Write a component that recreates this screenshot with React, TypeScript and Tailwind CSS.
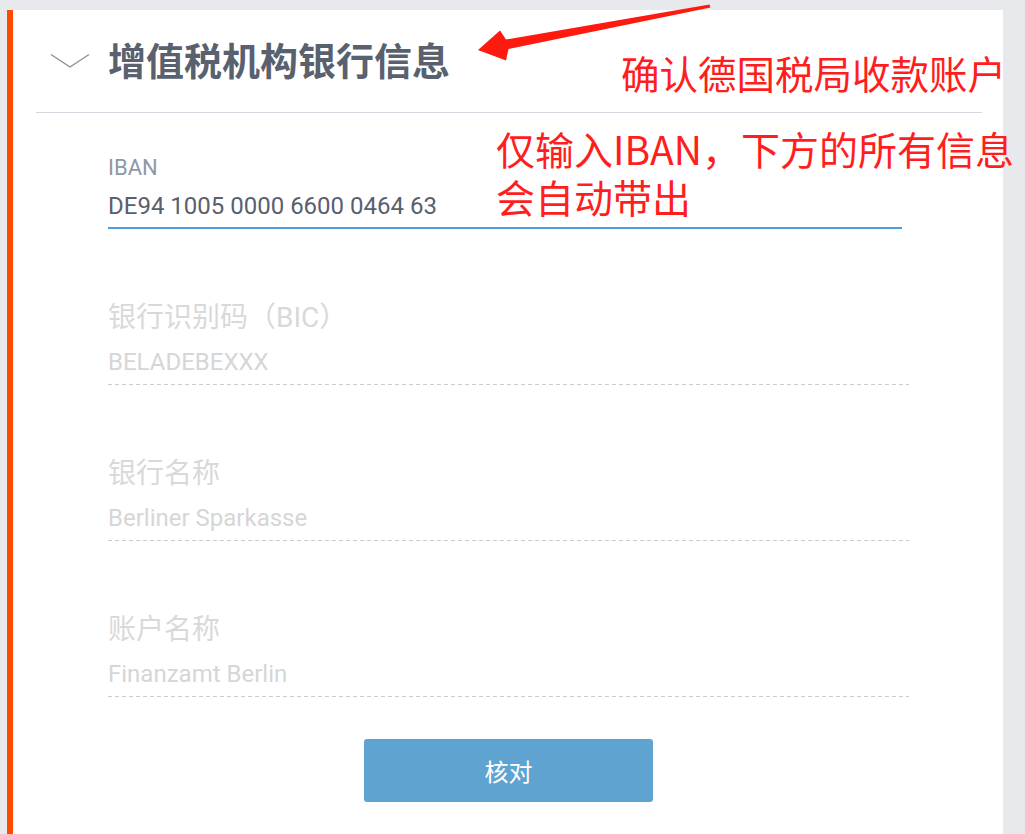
import React from 'react';

interface Field {
    label: string;
    value: string;
}

const lockedFields: Field[] = [
    { label: '银行识别码（BIC）', value: 'BELADEBEXXX' },
    { label: '银行名称', value: 'Berliner Sparkasse' },
    { label: '账户名称', value: 'Finanzamt Berlin' },
];

function Chevron() {
    return (
        <svg width="40" height="16" viewBox="0 0 40 16" fill="none">
            <polyline points="1,1.5 20,14 39,1.5" stroke="#8b9099" strokeWidth="1.4" />
        </svg>
    );
}

function Arrow() {
    return (
        <svg className="absolute left-0 top-0 pointer-events-none" width="1025" height="120" viewBox="0 0 1025 120">
            <polygon
                points="478,50 500,30.5 506,39.5 709.5,4.5 710.5,7.5 508.5,49 506,60.5"
                fill="#ff1a0f"
            />
        </svg>
    );
}

export default function App() {
    return (
        <div className="relative w-[1025px] h-[834px] overflow-hidden bg-[#e8e9ed] pt-[10px] pl-[7px] pr-[22px] font-['Roboto','Noto_Sans_CJK_SC',sans-serif]">
            <div className="h-[900px] bg-white border-l-[6px] border-[#ff4a00] flex flex-col">
                <div className="h-[102px] pb-[4px] flex items-center">
                    <div className="ml-[37px] mt-[4px]">
                        <Chevron />
                    </div>
                    <h2 className="ml-[18px] text-[38px] leading-none font-bold text-[#59616f] font-['Noto_Sans_CJK_SC',sans-serif]">
                        增值税机构银行信息
                    </h2>
                </div>
                <div className="ml-[23px] mr-[21px] h-px bg-[#d3d6dd]" />

                <div className="ml-[95px] w-[801px] pt-[44px] flex flex-col">
                    <div className="w-[794px] border-b-2 border-[#4a9fdf] pb-[9px]">
                        <div className="w-fit h-[22px] text-[22px] leading-[22px] text-[#8f97a6]">IBAN</div>
                        <div className="w-fit mt-[15px] h-[24px] text-[24px] leading-[24px] text-[#586070]">
                            DE94 1005 0000 6600 0464 63
                        </div>
                    </div>

                    {lockedFields.map((field) => (
                        <div key={field.label} className="mt-[75px]">
                            <div className="w-fit h-[28px] text-[28px] leading-[28px] text-[#d9d9d9]">{field.label}</div>
                            <div className="w-fit mt-[18px] h-[24px] text-[24px] leading-[24px] text-[#d6d6d6]">{field.value}</div>
                            <div className="mt-[10px] h-px bg-[repeating-linear-gradient(to_right,#c9ccd2_0_4px,transparent_4px_7px)]" />
                        </div>
                    ))}

                    <div className="mt-[42px] flex justify-center">
                        <button className="w-[289px] h-[63px] rounded-[3px] bg-[#5fa4d0] text-white text-[24px] font-['Noto_Sans_CJK_SC',sans-serif]">
                            核对
                        </button>
                    </div>
                </div>
            </div>

            {/* annotations drawn over the screenshot */}
            <Arrow />
            <div className="absolute left-[621px] top-[53px] text-[38.5px] leading-[38px] text-[#ff1e1e] font-['Noto_Sans_CJK_SC',sans-serif] whitespace-nowrap">
                确认德国税局收款账户
            </div>
            <div className="absolute left-[496px] top-[129px] text-[39px] leading-[38px] text-[#ff1e1e] font-['Noto_Sans_CJK_SC',sans-serif] whitespace-nowrap">
                仅输入IBAN，下方的所有信息
            </div>
            <div className="absolute left-[496px] top-[177px] text-[39px] leading-[38px] text-[#ff1e1e] font-['Noto_Sans_CJK_SC',sans-serif] whitespace-nowrap">
                会自动带出
            </div>
        </div>
    );
}
